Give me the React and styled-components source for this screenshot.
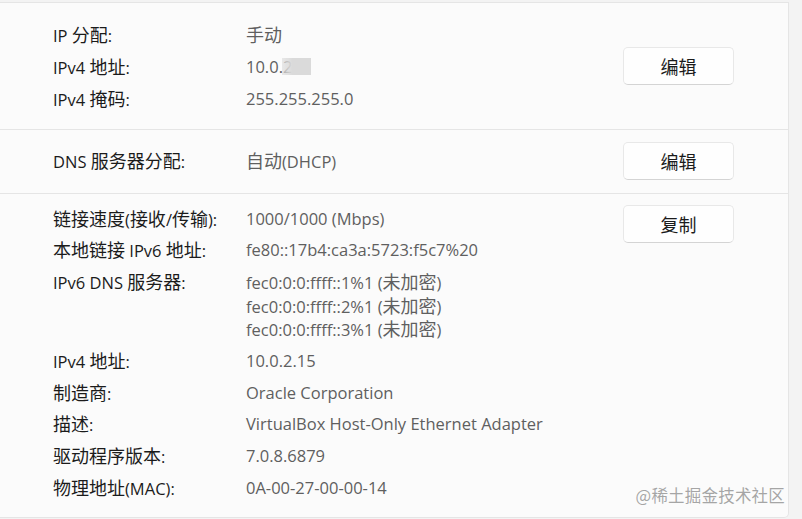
import React from "react";
import styled, { createGlobalStyle } from "styled-components";

const Global = createGlobalStyle`
  html, body { margin: 0; padding: 0; }
  body {
    background: #f3f3f3;
    font-family: "Open Sans", "Noto Sans CJK SC", sans-serif;
    -webkit-font-smoothing: antialiased;
  }
`;

const Page = styled.div`
  width: 802px;
  height: 519px;
  overflow: hidden;
  padding-top: 2px;
  box-sizing: border-box;
  position: relative;
`;

const Card = styled.div`
  width: 789px;
  box-sizing: border-box;
  background: #fbfbfb;
  border: 1px solid #e5e5e5;
  border-left: none;
  border-radius: 0 0 5px 0;
`;

const Section = styled.div`
  display: flex;
  align-items: ${(p) => (p.$top ? "flex-start" : "center")};
  padding: ${(p) => p.$pad};
  padding-left: 53px;
  padding-right: 54px;
  & + & {
    border-top: 1px solid #e5e5e5;
  }
`;

const Rows = styled.div`
  flex: 1;
  display: flex;
  flex-direction: column;
  gap: ${(p) => p.$gap || "8.5px"};
  padding-top: ${(p) => p.$offset || "0"};
`;

const Row = styled.div`
  display: grid;
  grid-template-columns: 193px 1fr;
  font-size: 16.5px;
`;

const Line = styled.span`
  display: block;
  height: 23.5px;
  line-height: 23.5px;
  white-space: nowrap;
`;

const Label = styled(Line)`
  color: #1b1b1b;
`;

const Value = styled.div`
  color: #5f5f5f;
  display: flex;
  flex-direction: column;
`;

const Han = styled.span`
  font-family: "Noto Sans CJK SC", sans-serif;
  font-size: 18px;
`;

const Masked = styled.span`
  position: relative;
  display: inline-block;
  width: max-content;
`;

const Blur = styled.span`
  position: absolute;
  left: 36px;
  top: 3px;
  width: 29px;
  height: 17px;
  background: linear-gradient(90deg, rgba(218,218,218,0.6) 0%, #dadada 35%, #dadada 100%);
  filter: blur(0.6px);
`;

const Button = styled.button`
  width: 111px;
  height: 38px;
  flex: none;
  box-sizing: border-box;
  background: #fefefe;
  border: 1px solid #e8e8e8;
  border-bottom-color: #d4d4d4;
  border-radius: 5px;
  font-family: "Noto Sans CJK SC", sans-serif;
  font-size: 18px;
  color: #1b1b1b;
  padding: 0;
  align-self: ${(p) => (p.$mt ? "flex-start" : "auto")};
  margin-top: ${(p) => p.$mt || "0"};
`;

const Watermark = styled.div`
  position: absolute;
  right: 17px;
  bottom: 12px;
  font-family: "Noto Sans CJK SC", sans-serif;
  font-size: 16.5px;
  color: rgba(150, 150, 150, 0.85);
  letter-spacing: 0.2px;
`;

const Text = ({ children }) => {
  if (typeof children !== "string") return children;
  const parts = children.split(/([\u3000-\u9fff\uff00-\uffef]+)/);
  return parts.map((p, i) =>
    i % 2 === 1 ? <Han key={i}>{p}</Han> : p
  );
};

const InfoRow = ({ label, values }) => (
  <Row>
    <Label>
      <Text>{label}</Text>
    </Label>
    <Value>
      {values.map((v, i) => (
        <Line key={i}>
          <Text>{v}</Text>
        </Line>
      ))}
    </Value>
  </Row>
);

export default function App() {
  return (
    <>
      <Global />
      <Page>
        <Card>
          <Section $pad="20px 0 18.5px">
            <Rows $gap="8.5px">
              <InfoRow label="IP 分配:" values={["手动"]} />
              <InfoRow
                label="IPv4 地址:"
                values={[
                  <Masked>
                    10.0.2
                    <Blur />
                  </Masked>,
                ]}
              />
              <InfoRow label="IPv4 掩码:" values={["255.255.255.0"]} />
            </Rows>
            <Button $mt="24px">编辑</Button>
          </Section>
          <Section $pad="12px 0 13px">
            <Rows>
              <InfoRow label="DNS 服务器分配:" values={["自动(DHCP)"]} />
            </Rows>
            <Button>编辑</Button>
          </Section>
          <Section $top $pad="11px 0 17.5px">
            <Rows $offset="1.5px" $gap="8.25px">
              <InfoRow label="链接速度(接收/传输):" values={["1000/1000 (Mbps)"]} />
              <InfoRow label="本地链接 IPv6 地址:" values={["fe80::17b4:ca3a:5723:f5c7%20"]} />
              <InfoRow
                label="IPv6 DNS 服务器:"
                values={[
                  "fec0:0:0:ffff::1%1 (未加密)",
                  "fec0:0:0:ffff::2%1 (未加密)",
                  "fec0:0:0:ffff::3%1 (未加密)",
                ]}
              />
              <InfoRow label="IPv4 地址:" values={["10.0.2.15"]} />
              <InfoRow label="制造商:" values={["Oracle Corporation"]} />
              <InfoRow label="描述:" values={["VirtualBox Host-Only Ethernet Adapter"]} />
              <InfoRow label="驱动程序版本:" values={["7.0.8.6879"]} />
              <InfoRow label="物理地址(MAC):" values={["0A-00-27-00-00-14"]} />
            </Rows>
            <Button>复制</Button>
          </Section>
        </Card>
        <Watermark>@稀土掘金技术社区</Watermark>
      </Page>
    </>
  );
}
